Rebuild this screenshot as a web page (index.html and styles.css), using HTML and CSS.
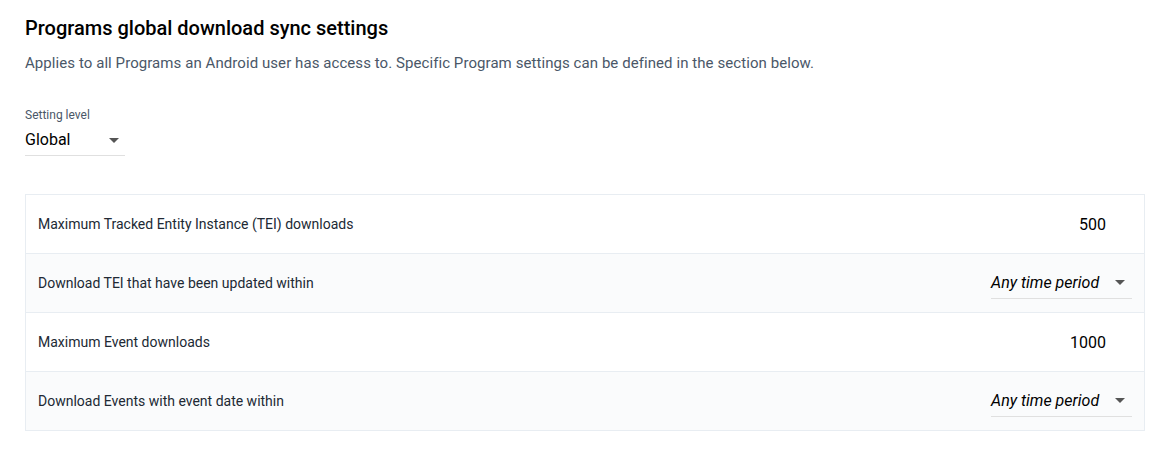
FILE: index.html
```html
<!DOCTYPE html>
<html>
<head>
<meta charset="utf-8">
<link rel="stylesheet" href="styles.css">
</head>
<body>
<div class="page">
  <h1 class="title">Programs global download sync settings</h1>
  <p class="subtitle">Applies to all Programs an Android user has access to. Specific Program settings can be defined in the section below.</p>

  <div class="level">
    <div class="level-label">Setting level</div>
    <div class="level-select">
      <span>Global</span>
      <span class="caret"></span>
    </div>
  </div>

  <div class="table">
    <div class="row">
      <div class="name">Maximum Tracked Entity Instance (TEI) downloads</div>
      <div class="number">500</div>
    </div>
    <div class="row alt">
      <div class="name">Download TEI that have been updated within</div>
      <div class="select"><span>Any time period</span><span class="caret"></span></div>
    </div>
    <div class="row">
      <div class="name">Maximum Event downloads</div>
      <div class="number">1000</div>
    </div>
    <div class="row alt">
      <div class="name">Download Events with event date within</div>
      <div class="select"><span>Any time period</span><span class="caret"></span></div>
    </div>
  </div>
</div>
</body>
</html>
```

FILE: styles.css
```css
* { box-sizing: border-box; }
body {
  margin: 0;
  font-family: Roboto, "Liberation Sans", sans-serif;
  color: #212934;
  background: #fff;
}
.page {
  padding: 14px 25px 0 25px;
}
.title {
  margin: 0;
  font-size: 20px;
  line-height: 28px;
  font-weight: 500;
  color: #000;
}
.subtitle {
  margin: 11px 0 0 0;
  font-size: 15px;
  line-height: 20px;
  letter-spacing: 0.07px;
  color: #4a5768;
}
.level {
  margin-top: 35px;
  width: 100px;
}
.level-label {
  font-size: 12px;
  line-height: 14px;
  color: #4a5768;
}
.level-select {
  display: flex;
  align-items: center;
  justify-content: space-between;
  height: 34px;
  padding: 9px 6px 6px 0;
  font-size: 16px;
  line-height: 18px;
  color: #000;
  border-bottom: 1px solid #e0e0e0;
}
.caret {
  width: 0;
  height: 0;
  border-left: 5px solid transparent;
  border-right: 5px solid transparent;
  border-top: 5px solid #555;
}
.table {
  margin-top: 38px;
  width: 1120px;
  border: 1px solid #e8edf2;
}
.row {
  display: flex;
  align-items: center;
  justify-content: space-between;
  height: 59px;
  padding: 0 12px 0 12px;
  border-top: 1px solid #e8edf2;
  font-size: 14px;
}
.row:first-child { border-top: none; height: 58px; }
.row.alt { background: #fafbfc; }
.name { color: #212934; }
.number {
  font-size: 16px;
  color: #000;
  margin-right: 26px;
}
.select {
  width: 141px;
  height: 29px;
  margin-top: 2px;
  display: flex;
  align-items: center;
  justify-content: space-between;
  padding: 0 7px 2px 0;
  font-size: 16px;
  font-style: italic;
  color: #000;
  border-bottom: 1px solid #e0e0e0;
}
```
